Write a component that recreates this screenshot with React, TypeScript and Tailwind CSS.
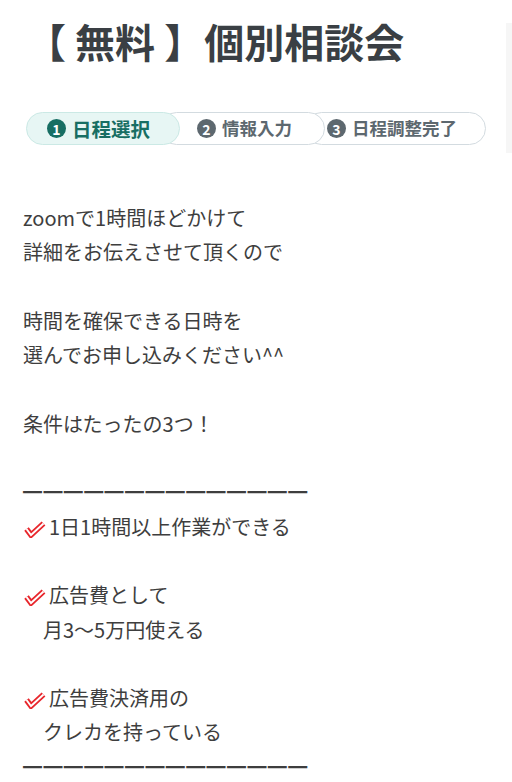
import React from "react";

const Check = () => (
  <svg width="22" height="18" viewBox="0 0 22 18" className="inline-block align-[-3px] mr-[3px] ml-[1px]">
    <path d="M2.5 9 L7 15 L19.5 3.5" fill="none" stroke="#e8262c" strokeWidth="5.6" strokeLinecap="butt" strokeLinejoin="miter" />
    <path d="M2.5 9 L7 15 L19.5 3.5" fill="none" stroke="#ffffff" strokeWidth="1.9" strokeLinecap="butt" strokeLinejoin="miter" />
  </svg>
);

const Num = ({ n, active }: { n: number; active?: boolean }) => (
  <span
    className={
      "inline-flex items-center justify-center rounded-full text-white font-bold w-[19px] h-[19px] text-[14px] leading-none mr-[6px] " +
      (active ? "bg-[#176e63]" : "bg-[#5d686f]")
    }
  >
    {n}
  </span>
);

const Dashes = () => (
  <p className="text-[19px] tracking-[1.4px] text-[#3e3e3e]">━━━━━━━━━━━━━━</p>
);

export default function App() {
  const body = "font-['Noto_Sans_CJK_JP','Noto_Sans',sans-serif]";
  return (
    <div className={"flex w-[512px] min-h-[782px] bg-white text-[#3e3e3e] " + body}>
      <div className="w-[506px]">
        <h1 className="pl-[26px] pt-[17px] text-[40px] leading-[48px] font-bold text-[#3a3f44] whitespace-nowrap">
          【 無料 】個別相談会
        </h1>
        <div className="mt-[47px] ml-[26px] flex h-[33px]">
          <div className="relative z-30 w-[154px] h-[33px] rounded-full border-[1.5px] border-[#cbe9e5] bg-[#e7f6f4] flex items-center pl-[20px] text-[19.5px] font-bold text-[#176e63] whitespace-nowrap">
            <Num n={1} active />
            日程選択
          </div>
          <div className="relative z-20 -ml-[20px] w-[165px] h-[33px] rounded-full border-[1.5px] border-[#d3dbe0] bg-white flex items-center pl-[36px] text-[17.5px] font-bold text-[#5d686f] whitespace-nowrap">
            <Num n={2} />
            情報入力
          </div>
          <div className="relative z-10 -ml-[20px] w-[181px] h-[33px] rounded-full border-[1.5px] border-[#d3dbe0] bg-white flex items-center pl-[21px] text-[17.5px] font-bold text-[#5d686f] whitespace-nowrap">
            <Num n={3} />
            日程調整完了
          </div>
        </div>
        <div className="mt-[56px] pl-[23px] text-[20px] leading-[34.3px] whitespace-nowrap">
          <p>zoomで1時間ほどかけて</p>
          <p>詳細をお伝えさせて頂くので</p>
          <p>&nbsp;</p>
          <p>時間を確保できる日時を</p>
          <p>選んでお申し込みください^^</p>
          <p>&nbsp;</p>
          <p>条件はたったの3つ！</p>
          <p>&nbsp;</p>
          <Dashes />
          <p><Check />1日1時間以上作業ができる</p>
          <p>&nbsp;</p>
          <p><Check />広告費として</p>
          <p>　月3〜5万円使える</p>
          <p>&nbsp;</p>
          <p><Check />広告費決済用の</p>
          <p>　クレカを持っている</p>
          <Dashes />
        </div>
      </div>
      <div className="w-[6px]">
        <div className="mt-[23px] h-[130px] bg-[#f6f6f6]" />
      </div>
    </div>
  );
}
